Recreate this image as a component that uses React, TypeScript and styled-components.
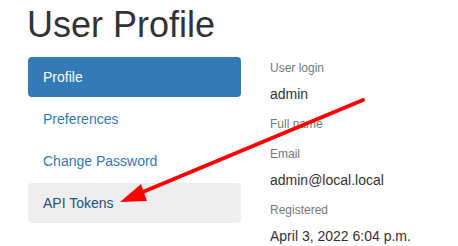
import React from "react";
import styled, { createGlobalStyle } from "styled-components";

const GlobalStyle = createGlobalStyle`
    html, body {
        margin: 0;
        padding: 0;
        background: #fff;
    }
    body {
        font-family: "Liberation Sans", Arial, Helvetica, sans-serif;
        font-size: 14px;
        color: #333;
    }
`;

const Page = styled.div`
    position: relative;
    width: 458px;
    height: 246px;
    overflow: hidden;
    padding: 5px 0 0 28px;
    box-sizing: border-box;
`;

const Title = styled.h1`
    margin: 0 0 12px -1px;
    font-size: 36px;
    font-weight: 400;
    line-height: 40px;
    color: #333;
`;

const Row = styled.div`
    display: flex;
    gap: 29px;
    align-items: flex-start;
`;

const Nav = styled.ul`
    list-style: none;
    margin: 0;
    padding: 0;
    width: 213px;
    display: flex;
    flex-direction: column;
    gap: 2px;
`;

const NavItem = styled.li<{ $active?: boolean; $hover?: boolean }>`
    padding: 10px 15px;
    line-height: 20px;
    border-radius: 4px;
    background: ${(p) => (p.$active ? "#337ab7" : p.$hover ? "#eee" : "transparent")};
    color: ${(p) => (p.$active ? "#fff" : p.$hover ? "#23527c" : "#337ab7")};
`;

const Details = styled.div`
    display: block;
    padding-top: 0.5px;
`;

const Label = styled.div`
    font-size: 12px;
    line-height: 20px;
    color: #777;
    margin-bottom: 6px;
`;

const Value = styled.div`
    font-size: 14px;
    line-height: 20px;
    color: #333;
    margin-bottom: 10px;
`;

const Overlay = styled.svg`
    position: absolute;
    left: 0;
    top: 0;
    pointer-events: none;
`;

const navItems = [
    { label: "Profile", active: true },
    { label: "Preferences" },
    { label: "Change Password" },
    { label: "API Tokens", hover: true },
];

const fields = [
    { label: "User login", value: "admin" },
    { label: "Full name", value: "" },
    { label: "Email", value: "admin@local.local" },
    { label: "Registered", value: "April 3, 2022 6:04 p.m." },
];

const App: React.FC = () => {
    return (
        <Page>
            <GlobalStyle />
            <Title>User Profile</Title>
            <Row>
                <Nav>
                    {navItems.map((item) => (
                        <NavItem key={item.label} $active={item.active} $hover={item.hover}>
                            {item.label}
                        </NavItem>
                    ))}
                </Nav>
                <Details>
                    {fields.map((f) => (
                        <React.Fragment key={f.label}>
                            <Label>{f.label}</Label>
                            <Value>{f.value}</Value>
                        </React.Fragment>
                    ))}
                </Details>
            </Row>
            {/* red annotation arrow */}
            <Overlay width="458" height="246" viewBox="0 0 458 246">
                <line x1="363" y1="100" x2="138" y2="194" stroke="#ff0000" strokeWidth="4" strokeLinecap="round" />
                <polygon points="120,202 141,184 147,201" fill="#ff0000" />
            </Overlay>
        </Page>
    );
};

export default App;
